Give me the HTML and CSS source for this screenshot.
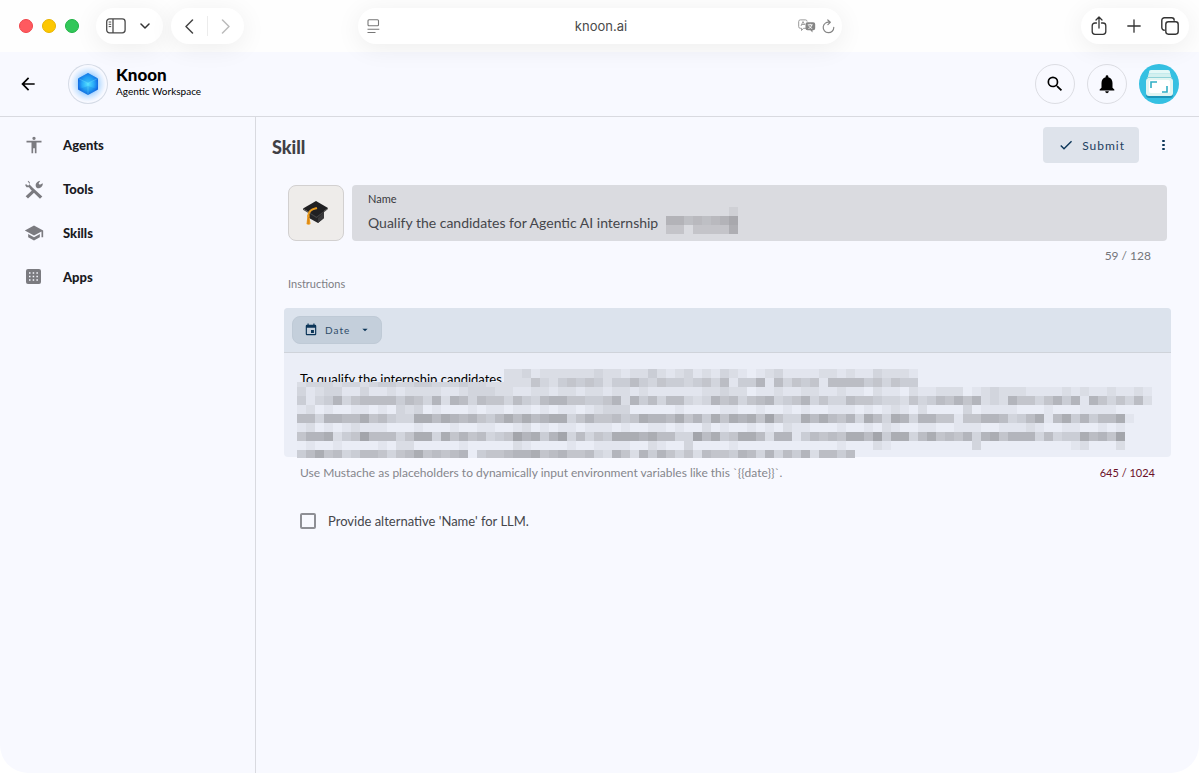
FILE: index.html
```html
<!DOCTYPE html>
<html lang="en">
<head>
<meta charset="utf-8">
<title>Knoon – Skill</title>
<link rel="stylesheet" href="styles.css">
</head>
<body>
<header class="browser">
  <div class="browser-side">
    <div class="lights"><span class="light red"></span><span class="light yellow"></span><span class="light green"></span></div>
    <div class="pill sidebar-pill">
      <button class="tool" aria-label="Sidebar"><svg width="20" height="16" viewBox="0 0 20 16" fill="none" stroke="#4a4a4a" stroke-width="1.3"><rect x=".7" y=".9" width="18.4" height="14" rx="2.8"/><path d="M7 1v14"/><path d="M2.700 4h2.500M2.700 6.300h2.500M2.700 8.600h2.500" stroke-width="1"/></svg></button>
      <button class="tool" aria-label="Tab groups"><svg width="10" height="6" viewBox="0 0 10 6" fill="none" stroke="#333" stroke-width="1.5" stroke-linecap="round" stroke-linejoin="round"><path d="M1 1l4 4 4-4"/></svg></button>
    </div>
    <div class="pill nav-pill">
      <button class="tool" aria-label="Back"><svg width="9" height="15" viewBox="0 0 9 15" fill="none" stroke="#444" stroke-width="1.5" stroke-linecap="round" stroke-linejoin="round"><path d="M7.500 1L1 7.500 7.500 14"/></svg></button>
      <span class="split"></span>
      <button class="tool" aria-label="Forward"><svg width="9" height="15" viewBox="0 0 9 15" fill="none" stroke="#bbb" stroke-width="1.5" stroke-linecap="round" stroke-linejoin="round"><path d="M1.500 1L8 7.500 1.500 14"/></svg></button>
    </div>
  </div>
  <div class="pill address">
    <button class="tool" aria-label="Reader"><svg width="13" height="15" viewBox="0 0 13 15" fill="none" stroke="#777" stroke-width="1.1"><rect x="1" y=".8" width="10.500" height="6" rx="1"/><path d="M.5 10.300h11.800M.5 13.500h8"/></svg></button>
    <span class="host">knoon.ai</span>
    <span class="address-tools">
      <button class="tool" aria-label="Translate"><svg width="18" height="14" viewBox="0 0 18 14"><path d="M8 9.300H5.500L3.500 11.500V9.300H2.300A1.600 1.600 0 0 1 .7 7.700V2.500A1.600 1.600 0 0 1 2.300.9h5.200A1.600 1.600 0 0 1 9.100 2.500" fill="none" stroke="#999"/><path d="M3 7l2-4.500L6.800 6M3.600 5.500h2.500" fill="none" stroke="#999" stroke-width=".9"/><path d="M9.500 3.300h5.700A2 2 0 0 1 17.200 5.300v4a2 2 0 0 1-2 2h-.7v2.200l-2.200-2.200H9.500a2 2 0 0 1-2-2v-4a2 2 0 0 1 2-2z" fill="#858585"/><path d="M9.700 5.800h5M12.200 4.800v1M10.500 9.500c2-.7 3-2 3.200-3.600M10.800 6.500c.5 1.500 1.800 2.500 3.400 3" fill="none" stroke="#fff" stroke-width=".9"/></svg></button>
      <button class="tool" aria-label="Reload"><svg width="13" height="15" viewBox="0 0 13 15" fill="none" stroke="#858585" stroke-width="1.200" stroke-linecap="round" stroke-linejoin="round"><path d="M7.500 3.200A5.300 5.300 0 1 0 11.800 8.300M5.800 1l2.500 2.300-2.400 2.400"/></svg></button>
    </span>
  </div>
  <div class="browser-side end">
    <div class="pill window-pill">
      <button class="tool" aria-label="Share"><svg width="16" height="20" viewBox="0 0 16 20" fill="none" stroke="#333" stroke-width="1.300" stroke-linecap="round" stroke-linejoin="round"><path d="M5.500 7H4a2.800 2.800 0 0 0-2.800 2.800v5.700A2.800 2.800 0 0 0 4 18.300h8a2.800 2.800 0 0 0 2.800-2.800V9.800A2.800 2.800 0 0 0 12 7h-1.500M8 12V1.300M5 4l3-3 3 3"/></svg></button>
      <button class="tool" aria-label="New tab"><svg width="14" height="14" viewBox="0 0 14 14" fill="none" stroke="#333" stroke-width="1.300" stroke-linecap="round"><path d="M7 .8v12.400M.8 7h12.400"/></svg></button>
      <button class="tool" aria-label="Tabs"><svg width="18" height="18" viewBox="0 0 18 18" fill="none" stroke="#333" stroke-width="1.400"><rect x="4.800" y="4.800" width="12.400" height="12.400" rx="2.600"/><path d="M3.800 13.200h-.4A2.600 2.600 0 0 1 .8 10.600V3.400A2.600 2.600 0 0 1 3.400.8h7.200a2.600 2.600 0 0 1 2.600 2.600v.4"/></svg></button>
    </div>
  </div>
</header>

<div class="app">
  <header class="bar">
    <button class="icon-btn back" aria-label="Back"><svg width="20" height="20" viewBox="0 0 24 24"><path d="M20 11H7.830l5.590-5.590L12 4l-8 8 8 8 1.410-1.410L7.830 13H20z"/></svg></button>
    <span class="logo"><svg width="40" height="40" viewBox="0 0 40 40"><defs><radialGradient id="glow"><stop offset=".45" stop-color="#6db9ff" stop-opacity=".75"/><stop offset="1" stop-color="#b5dcff" stop-opacity="0"/></radialGradient><radialGradient id="core"><stop offset="0" stop-color="#54e0ff"/><stop offset=".6" stop-color="#28a9f8"/><stop offset="1" stop-color="#136be3"/></radialGradient></defs><circle cx="20" cy="20" r="18" fill="url(#glow)"/><path d="M20 9l10 5.500v11L20 31l-10-5.500v-11z" fill="url(#core)"/><path d="M10 14.500L20 19l10-4.500-10-5.500z" fill="#168eea" opacity=".35"/><path d="M10 25.500L20 31l10-5.500L20 22z" fill="#0759ce" opacity=".2"/><path d="M20 19v12M10 14.500L20 19l10-4.500" fill="none" stroke="#7feaff" stroke-width=".6" opacity=".5"/></svg></span>
    <div class="brand"><strong>Knoon</strong><span>Agentic Workspace</span></div>
    <div class="actions">
      <button class="round" aria-label="Search"><svg width="20" height="20" viewBox="0 0 24 24"><path d="M15.500 14h-.79l-.28-.27A6.470 6.470 0 0 0 16 9.500 6.500 6.500 0 1 0 9.500 16c1.610 0 3.090-.59 4.230-1.570l.27.28v.79l5 4.990L20.490 19zm-6 0a4.500 4.500 0 1 1 0-9 4.500 4.500 0 0 1 0 9z"/></svg></button>
      <button class="round" aria-label="Notifications"><svg width="22" height="22" viewBox="0 0 24 24"><path d="M12 22c1.100 0 2-.9 2-2h-4a2 2 0 0 0 2 2zm6-6v-5c0-3.070-1.640-5.640-4.500-6.320V4a1.500 1.500 0 0 0-3 0v.68C7.630 5.360 6 7.920 6 11v5l-2 2v1h16v-1z"/></svg></button>
      <button class="avatar" aria-label="Account"><svg width="40" height="40" viewBox="0 0 40 40"><circle cx="20" cy="20" r="20" fill="#35c0e2"/><rect x="7" y="14" width="27" height="20" rx="3" fill="#1c94b8"/><rect x="10" y="6" width="21" height="12" rx="2" fill="#e4f8f7"/><path d="M9 10h23" stroke="#a5dfe3"/><rect x="9" y="10" width="23" height="10" rx="2" fill="#d3f0ef"/><path d="M8 13.500h25" stroke="#90d2d8"/><rect x="7" y="14" width="27" height="18" rx="3" fill="#e2f5f2"/><rect x="10" y="16" width="21" height="13" rx="2" fill="#fff"/><path d="M12 24v-6h6M28 22v6h-5" fill="none" stroke="#31aec5" stroke-width="1.600"/></svg></button>
    </div>
  </header>
  <div class="body">
    <nav class="side">
      <a href="#"><svg width="20" height="20" viewBox="0 0 24 24"><path d="M12 2a2 2 0 1 1 0 4 2 2 0 0 1 0-4zm9 7h-6v13h-2v-6h-2v6H9V9H3V7h18z"/></svg>Agents</a>
      <a href="#"><svg width="20" height="20" viewBox="0 0 24 24"><path d="M5 2l2 2v3l3.500 3.500 11.500 10.500-2.800 2.800L8.200 12.800 6 10H3L1.500 7.500l.7-1.500L5 8l2-2-2.500-3z"/><path d="M10.500 13l2.500 2.500L4.800 23.500 2 20.700zM14.500 9.500c-1.500-3.500 1-7 5-7.500l-2 3.500 1.500 1.500L22.500 5c.5 4-3.500 7-7 5.700z"/></svg>Tools</a>
      <a href="#"><svg width="20" height="20" viewBox="0 0 24 24"><path d="M5 13.180v4L12 21l7-3.820v-4L12 17zM12 3L1 9l11 6 9-4.910V17h2V9z"/></svg>Skills</a>
      <a href="#"><svg width="20" height="20" viewBox="0 0 20 20"><rect x="2" y="2" width="15" height="15" rx="2"/><path d="M5 6h9M5 9.500h9M5 13h9" stroke="#f8f9ff" stroke-width="1.500" stroke-dasharray="1.500 2.200"/></svg>Apps</a>
    </nav>
    <main class="content">
      <div class="title-row">
        <h1>Skill</h1>
        <button class="submit"><svg width="16" height="16" viewBox="0 0 24 24"><path d="M9 16.170L4.830 12l-1.420 1.410L9 19 21 7l-1.410-1.410z"/></svg>Submit</button>
        <button class="icon-btn more" aria-label="More"><svg width="16" height="16" viewBox="0 0 16 16"><rect x="7" y="3" width="3" height="2" rx="1"/><rect x="7" y="7" width="3" height="2" rx="1"/><rect x="7" y="11" width="3" height="2" rx="1"/></svg></button>
      </div>
      <form class="form">
        <div class="name-row">
          <button type="button" class="emoji" aria-label="Icon"><svg width="28" height="28" viewBox="0 0 28 28"><path d="M7 13v6l9 5 6-5v-8z" fill="#242426"/><path d="M16 19v5l6-5v-6z" fill="#39393b"/><path d="M1 9.500L14 2l12 7-11.500 9z" fill="#202022"/><path d="M1 9.500v1.200l13.500 8.300L26 10V9l-11.500 8.700z" fill="#444"/><path d="M15 9c-5 1.500-8.500 2-8.800 9" fill="none" stroke="#e79a1f" stroke-width="2"/><path d="M5.500 16h1.800l1.200 9c-1 1-3 1-4 0z" fill="#ef9b1c"/><path d="M6.300 18l-.2 7" stroke="#b96f12" stroke-width=".6"/></svg></button>
          <div class="name-field">
            <label for="name">Name</label>
            <input id="name" value="Qualify the candidates for Agentic AI internship">
            <svg class="name-mask" width="72" height="27" aria-hidden="true"></svg>
          </div>
        </div>
        <div class="count">59 / 128</div>
        <label class="section" for="instructions">Instructions</label>
        <div class="editor">
          <div class="editor-bar">
            <button type="button" class="date"><svg width="14" height="14" viewBox="0 0 24 24"><path d="M17 12h-5v5h5zM16 1v2H8V1H6v2H5a2 2 0 0 0-2 2v14a2 2 0 0 0 2 2h14a2 2 0 0 0 2-2V5a2 2 0 0 0-2-2h-1V1zm3 18H5V8h14z"/></svg>Date<svg width="16" height="16" viewBox="0 0 24 24"><path d="M8 10l4 4 4-4z"/></svg></button>
          </div>
          <div class="editor-body">
            <textarea id="instructions">To qualify the internship candidates</textarea>
            <svg class="text-mask" width="855" height="89" aria-hidden="true"></svg>
          </div>
        </div>
        <div class="help"><span>Use Mustache as placeholders to dynamically input environment variables like this `{{date}}`.</span><span class="limit">645 / 1024</span></div>
        <label class="check"><input type="checkbox">Provide alternative 'Name' for LLM.</label>
      </form>
    </main>
  </div>
</div>
<script src="mask.js"></script>
</body>
</html>
```
FILE: styles.css
```css
* { box-sizing: border-box; }
body {
  margin: 0;
  min-height: 100vh;
  display: flex;
  flex-direction: column;
  background: #fff;
  color: #1b1b1f;
  font-family: Lato, "Open Sans", sans-serif;
}
button { font: inherit; border: 0; background: none; padding: 0; }
svg { display: block; }

.browser {
  position: relative;
  display: flex;
  align-items: center;
  height: 52px;
  padding: 0 10px;
  background: #fefefe;
  z-index: 1;
}
.browser-side { flex: 1; display: flex; align-items: center; }
.end { justify-content: flex-end; }
.lights { display: flex; gap: 9px; margin: 0 17px 0 9px; }
.light { width: 14px; height: 14px; border-radius: 50%; }
.red { background: #ff5a5f; border: 1px solid #f0444a; }
.yellow { background: #fdc700; border: 1px solid #e8b400; }
.green { background: #32c759; border: 1px solid #1fb244; }
.pill {
  display: flex;
  align-items: center;
  height: 36px;
  border-radius: 18px;
  background: #fff;
  box-shadow: 0 4px 26px rgba(0, 0, 0, .07);
}
.tool { display: flex; }
.sidebar-pill { gap: 14px; padding: 0 13px 0 10px; margin-right: 8px; }
.nav-pill { gap: 13px; padding: 0 14px; }
.split { width: 1px; height: 20px; background: #ececec; }
.address { flex: 0 1 484px; justify-content: space-between; padding: 0 7px 0 9px; }
.host { font: 13px/20px Inter, sans-serif; color: #4a4a4a; padding-left: 25px; }
.address-tools { display: flex; align-items: center; gap: 6px; }
.window-pill { gap: 20px; padding: 0 10px; }

.app {
  flex: 1;
  display: flex;
  flex-direction: column;
  background: #f8f9ff;
  border-radius: 0 0 28px 28px;
}
.bar {
  display: flex;
  align-items: center;
  height: 65px;
  padding: 0 20px 0 18px;
  border-bottom: 1px solid #d9dae0;
}
.icon-btn { display: flex; }
.back { margin-right: 30px; }
.logo { border-radius: 50%; box-shadow: inset 0 0 0 1px #d5dbe6; margin-right: 8px; }
.brand { display: flex; flex-direction: column; padding-bottom: 6px; color: #000; }
.brand strong { font-size: 17px; line-height: 20px; font-weight: 900; }
.brand span { font-size: 10px; line-height: 12px; }
.actions { display: flex; gap: 12px; margin-left: auto; }
.round {
  display: flex;
  align-items: center;
  justify-content: center;
  width: 40px;
  height: 40px;
  border: 1px solid #dcdde3;
  border-radius: 50%;
}
.avatar { border-radius: 50%; }

.body { flex: 1; display: flex; }
.side { flex: 0 0 256px; padding-top: 6px; border-right: 1px solid #d9dae0; }
.side a {
  display: flex;
  align-items: center;
  gap: 19px;
  height: 44px;
  padding-left: 24px;
  color: #1b1b1f;
  font-size: 13px;
  font-weight: 900;
  text-decoration: none;
}
.side svg { fill: #7b7b80; }
.content { flex: 1; min-width: 0; padding: 10px 28px 24px; }
.title-row { display: flex; align-items: center; }
h1 { margin: 4px auto 0 -12px; font-size: 18px; line-height: 24px; font-weight: 900; color: #404045; }
.submit {
  display: flex;
  align-items: center;
  gap: 8px;
  height: 36px;
  padding: 0 14px 0 15px;
  border-radius: 4px;
  background: #dee3eb;
  color: #1c405f;
  font-size: 12px;
  letter-spacing: 1px;
}
.submit svg, .date svg, .more svg { fill: #0b3558; }
.more { margin-left: 16px; }

.name-row { display: flex; gap: 8px; margin: 22px 4px 0; }
.emoji {
  display: flex;
  align-items: center;
  justify-content: center;
  width: 56px;
  height: 56px;
  border: 1px solid #d2d0d0;
  border-radius: 8px;
  background: #eeecea;
}
.name-field {
  position: relative;
  flex: 1;
  height: 56px;
  padding: 6px 16px;
  border-radius: 4px;
  background: #dadbe0;
}
.name-field label { display: block; font-size: 11px; line-height: 16px; color: #38383c; }
.name-field input {
  display: block;
  width: 100%;
  height: 30px;
  padding: 0;
  border: 0;
  background: none;
  color: #45464b;
  font: 14px/20px Lato, sans-serif;
}
.name-mask { position: absolute; left: 314px; top: 22px; }
.count { margin: 7px 20px 0; font-size: 12px; line-height: 16px; text-align: right; color: #74757a; }
.section { display: block; margin: 12px 4px 16px; font-size: 11px; line-height: 16px; color: #7d7e84; }
.editor { border-radius: 4px; background: #ebeef7; }
.editor-bar {
  padding: 8px;
  border-bottom: 1px solid #cfd3da;
  border-radius: 4px 4px 0 0;
  background: #dce3ed;
}
.date {
  display: flex;
  align-items: center;
  gap: 7px;
  height: 28px;
  padding: 0 8px 0 11px;
  border: 1px solid #bfcad6;
  border-radius: 8px;
  background: #c4cfdb;
  color: #2d4c68;
  font-size: 10px;
  letter-spacing: 1px;
}
.editor-body { position: relative; height: 104px; }
.editor textarea {
  display: block;
  width: 100%;
  height: 104px;
  padding: 16px;
  border: 0;
  resize: none;
  background: none;
  color: #000;
  font: 13px/20px Lato, sans-serif;
}
.text-mask { position: absolute; left: 13px; top: 16px; }
.help {
  display: flex;
  justify-content: space-between;
  gap: 16px;
  margin: 8px 16px 0;
  font-size: 12px;
  line-height: 16px;
  color: #85868c;
}
.limit { font-size: 11px; color: #6b1028; }
.check {
  display: flex;
  align-items: center;
  gap: 12px;
  margin: 30px 16px 0;
  font-size: 13px;
  line-height: 20px;
  color: #45464b;
}
.check input {
  appearance: none;
  width: 16px;
  height: 16px;
  margin: 0;
  border: 2px solid #8e8f95;
  border-radius: 2px;
}
```
FILE: mask.js
```js
// Redaction mosaics: each digit is the darkness of one 9px cell, a space is an empty cell.
const CELL = 9;

function drawMosaic(svg, rows, light, dark) {
  rows.forEach(({ y, height, levels }) => {
    [...levels].forEach((level, column) => {
      if (level === " ") return;
      const t = Number(level) / 9;
      const rgb = light.map((c, i) => Math.round(c + (dark[i] - c) * t));
      const rect = document.createElementNS("http://www.w3.org/2000/svg", "rect");
      rect.setAttribute("x", column * CELL);
      rect.setAttribute("y", y);
      rect.setAttribute("width", CELL);
      rect.setAttribute("height", height);
      rect.setAttribute("shape-rendering", "crispEdges");
      rect.setAttribute("fill", `rgb(${rgb})`);
      svg.append(rect);
    });
  });
}

drawMosaic(document.querySelector(".name-mask"), [
  { y: 0, height: 9, levels: "       2" },
  { y: 9, height: 9, levels: "77565679" },
  { y: 18, height: 9, levels: "44 44448" },
], [218, 219, 224], [168, 168, 173]);

drawMosaic(document.querySelector(".text-mask"), [
  { y: 0, height: 9, levels: " ".repeat(23) + "2231222222322122421231213210123111122121132221" },
  { y: 9, height: 9, levels: " ".repeat(23) + "2225324545424464354434536144716354516666453544" },
  { y: 13, height: 5, levels: "23332332344334433343322" },
  { y: 18, height: 9, levels: "31233113112122221123332211221221221221211111122322011211221121102110211222012322211112121121121" },
  { y: 27, height: 9, levels: "41347356666465372763655364367755445727463663237563567345735336554332534657572327553574717535362" },
  { y: 36, height: 9, levels: "12010011010323010001011011010110123330000010000110010010100111010121020000301111000100011110" },
  { y: 45, height: 9, levels: "66377668564338868767546868678835755645877685748587859533868657386387377551557763468168474668688" + "" },
  { y: 54, height: 9, levels: "12010121110001000100110012010110111010011010020100101021100010010210011001110011121001100101" },
  { y: 63, height: 9, levels: "57782459666358838575634597847936354888786633968458862771465658869488368565737857773634486759" },
  { y: 72, height: 9, levels: "01001000010220000010000021000010011110021003000010000000000010002100000000030000000000120002" },
  { y: 81, height: 8, levels: "46856346653568565670455677856755632752747535265547637364726646" },
].map((row) => row.y === 45 ? { ...row, levels: row.levels.slice(0, 92) + "1" } : row), [234, 237, 246], [163, 165, 171]);
```
